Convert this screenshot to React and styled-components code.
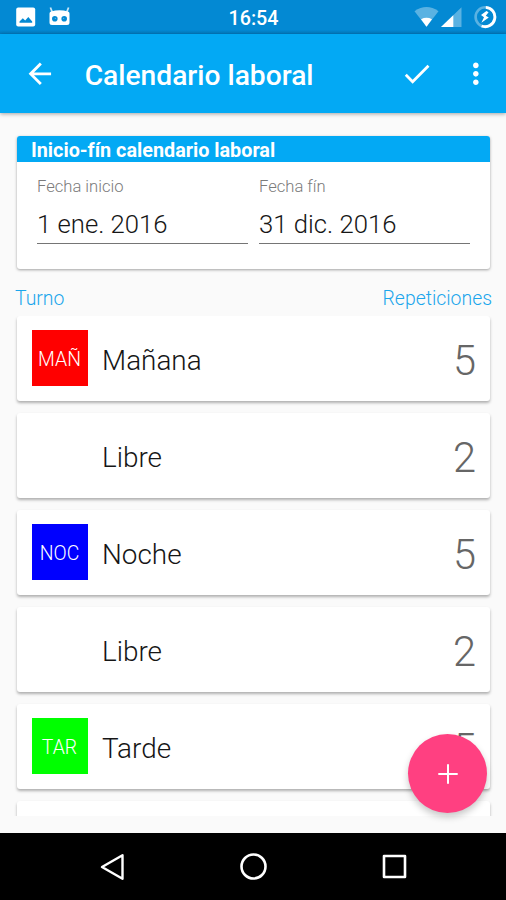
import React from "react";
import styled, { createGlobalStyle } from "styled-components";

const GlobalStyle = createGlobalStyle`
  body {
    margin: 0;
    background: #fafafa;
    font-family: Roboto, "Liberation Sans", sans-serif;
  }
`;

const Screen = styled.div`
  position: relative;
  width: 506px;
  height: 900px;
  display: flex;
  flex-direction: column;
  overflow: hidden;
  background: #fafafa;
`;

const StatusBar = styled.div`
  display: grid;
  grid-template-columns: 1fr auto 1fr;
  align-items: center;
  height: 34px;
  padding: 0 9px 0 15px;
  box-sizing: border-box;
  background: linear-gradient(#0389d3 30px, #0279bd 34px);
`;

const StatusIcons = styled.div`
  display: flex;
  align-items: center;
  justify-content: ${(props) => props.$align || "flex-start"};
  gap: ${(props) => props.$gap};
`;

const IconGap = styled.span`
  width: ${(props) => (props.$wide ? "11px" : "2px")};
`;

const Clock = styled.span`
  font-size: 19.7px;
  line-height: 24px;
  font-weight: 500;
  color: #fff;
  padding-top: 3px;
  margin: 0 10px 0 5px;
`;

const AppBar = styled.header`
  display: flex;
  align-items: center;
  height: 79px;
  padding: 0 13px 0 23px;
  box-sizing: border-box;
  flex-shrink: 0;
  background: #03a9f4;
  box-shadow: 0 1px 4px rgba(0, 0, 0, 0.35);
`;

const IconButton = styled.button`
  display: flex;
  padding: 0;
  border: none;
  background: none;
  color: #fff;
  cursor: pointer;
  margin-right: ${(props) => props.$space || "0"};
`;

const Title = styled.h1`
  flex: 1;
  margin: 4px 0 0;
  font-size: 28.2px;
  line-height: 34px;
  font-weight: 500;
  color: #fff;
`;

const Content = styled.main`
  height: 703px;
  overflow: hidden;
  padding: 23px 16px 0 17px;
  box-sizing: border-box;
`;

const Card = styled.section`
  background: #fff;
  border-radius: 3px;
  overflow: hidden;
  box-shadow: 0 1px 3px rgba(0, 0, 0, 0.36);
`;

const DatesCard = styled(Card)`
  height: 133px;
`;

const CardHeader = styled.h2`
  margin: 0;
  padding-left: 14px;
  height: 26px;
  line-height: 29px;
  font-size: 19.8px;
  font-weight: 700;
  color: #fff;
  background: #03a9f4;
`;

const DateFields = styled.div`
  display: grid;
  grid-template-columns: 1fr 1fr;
  gap: 11px;
  padding: 13px 20px 0;
`;

const Field = styled.label`
  display: flex;
  flex-direction: column;
  height: 69px;
  box-sizing: border-box;
  border-bottom: 1.5px solid #757575;
`;

const FieldLabel = styled.span`
  font-size: 16.6px;
  line-height: 24px;
  font-weight: 300;
  color: #7b7b7b;
`;

const FieldValue = styled.span`
  margin-top: 9px;
  font-size: 25.7px;
  line-height: 33px;
  font-weight: 300;
  color: #161616;
`;

const ListHeader = styled.div`
  display: flex;
  justify-content: space-between;
  height: 47px;
  padding-top: 18px;
  box-sizing: border-box;
  margin: 0 -2px;
  font-size: 19.4px;
  line-height: 24px;
  font-weight: 300;
  color: #1ba6ec;
`;

const List = styled.div`
  display: flex;
  flex-direction: column;
  gap: 12px;
  height: 500px;
  margin: 0 -4px;
  padding: 0 4px;
  overflow: hidden;
`;

const ShiftCard = styled(Card)`
  display: flex;
  align-items: center;
  flex-shrink: 0;
  height: 85px;
  padding: 0 14px 1px 14.5px;
  box-sizing: border-box;
  box-shadow: 0 2px 3px rgba(0, 0, 0, 0.3);
`;

const Badge = styled.div`
  display: flex;
  align-items: center;
  justify-content: center;
  width: 56px;
  height: 56px;
  padding-top: 2px;
  box-sizing: border-box;
  font-size: 19.4px;
  font-weight: 300;
  color: #fff;
  background: ${(props) => props.$color};
`;

const ShiftName = styled.span`
  flex: 1;
  margin: 5px 0 0 14.5px;
  font-size: 27.9px;
  line-height: 34px;
  font-weight: 300;
  color: #161616;
`;

const Repeats = styled.span`
  margin-top: 6px;
  font-size: 41.6px;
  line-height: 50px;
  font-weight: 300;
  color: #666;
`;

const AddButton = styled.button`
  position: absolute;
  right: 19px;
  bottom: 87px;
  width: 79px;
  height: 79px;
  display: flex;
  align-items: center;
  justify-content: center;
  padding: 0;
  border: none;
  border-radius: 50%;
  background: #ff4081;
  box-shadow: 0 4px 7px rgba(0, 0, 0, 0.22);
  cursor: pointer;
`;

const NavBar = styled.nav`
  display: flex;
  align-items: center;
  justify-content: center;
  gap: 113px;
  height: 67px;
  margin-top: auto;
  background: #000;
`;

const shifts = [
  { name: "Mañana", code: "MAÑ", color: "#ff0000", repeats: 5 },
  { name: "Libre", code: "", color: "transparent", repeats: 2 },
  { name: "Noche", code: "NOC", color: "#0000ff", repeats: 5 },
  { name: "Libre", code: "", color: "transparent", repeats: 2 },
  { name: "Tarde", code: "TAR", color: "#00ff00", repeats: 5 },
  { name: "", code: "", color: "transparent", repeats: "" },
];

const MaterialIcon = ({ d }) => (
  <svg width="33.7" height="33.7" viewBox="0 0 24 24" fill="currentColor">
    <path d={d} />
  </svg>
);

const PictureIcon = () => (
  <svg width="21" height="20" viewBox="0 0 21 20">
    <rect x="1.2" y="0.5" width="19" height="19" rx="2" fill="#fff" />
    <path d="M4.5 15.8 V14.5 L7.8 11.3 L10.2 13.6 L13.3 10 L17.2 14.5 V15.8 Z" fill="#0389d3" />
  </svg>
);

const RobotIcon = () => (
  <svg width="23" height="20" viewBox="0 0 23 20">
    <path d="M2.4 0.5 L4.2 5 M20.6 0.5 L18.8 5" stroke="#c9e6f7" strokeWidth="1.8" />
    <path d="M1.5 6.5 Q1.5 5 3 4.6 Q11.5 2 20 4.6 Q21.5 5 21.5 6.5 V15.5 Q21.5 18 19 18 H4 Q1.5 18 1.5 15.5 Z" fill="#fff" />
    <circle cx="6.8" cy="11.8" r="2.8" fill="#0389d3" />
    <circle cx="16.2" cy="11.8" r="2.8" fill="#0389d3" />
    <circle cx="7.4" cy="11.4" r="0.7" fill="#5aafe0" />
    <circle cx="15.6" cy="11.4" r="0.7" fill="#5aafe0" />
  </svg>
);

const WifiIcon = () => (
  <svg width="25" height="22" viewBox="0 0 25 22">
    <path d="M0.5 5.2 Q12.5 -3.2 24.5 5.2 L12.5 20.8 Z" fill="#fff" opacity="0.35" />
    <path d="M7 13.2 Q12.5 10.4 18 13.2 L12.5 20.8 Z" fill="#fff" />
  </svg>
);

const SignalIcon = () => (
  <svg width="21" height="22" viewBox="0 0 21 22">
    <path d="M0 21 L20.5 1.2 V21 Z" fill="#fff" opacity="0.35" />
    <path d="M0 21 L12.3 9.2 V21 Z" fill="#fff" />
  </svg>
);

const BatteryIcon = () => (
  <svg width="24" height="24" viewBox="0 0 24 24">
    <circle cx="12.3" cy="12" r="9.7" fill="none" stroke="#fff" strokeWidth="2.6" opacity="0.35" />
    <path d="M12.8 2.3 A9.7 9.7 0 1 1 8.6 21" fill="none" stroke="#fff" strokeWidth="2.8" />
    <path d="M13.4 6 L8 10 L11 12.2 L8.4 17.8 L15.8 12.6 L12.8 10.8 L15.6 7.2 Z" fill="#fff" />
  </svg>
);

const App = () => {
  return (
    <>
      <GlobalStyle />
      <Screen>
        <StatusBar>
          <StatusIcons $gap="12px">
            <PictureIcon />
            <RobotIcon />
          </StatusIcons>
          <Clock>16:54</Clock>
          <StatusIcons $gap="0" $align="flex-end">
            <WifiIcon />
            <IconGap />
            <SignalIcon />
            <IconGap $wide />
            <BatteryIcon />
          </StatusIcons>
        </StatusBar>
        <AppBar>
          <IconButton $space="28px" aria-label="Atrás">
            <MaterialIcon d="M20 11H7.83l5.59-5.59L12 4l-8 8 8 8 1.41-1.41L7.83 13H20v-2z" />
          </IconButton>
          <Title>Calendario laboral</Title>
          <IconButton $space="26px" aria-label="Guardar">
            <MaterialIcon d="M9 16.17L4.83 12l-1.42 1.41L9 19 21 7l-1.41-1.41z" />
          </IconButton>
          <IconButton aria-label="Más">
            <MaterialIcon d="M12 8c1.1 0 2-.9 2-2s-.9-2-2-2-2 .9-2 2 .9 2 2 2zm0 2c-1.1 0-2 .9-2 2s.9 2 2 2 2-.9 2-2-.9-2-2-2zm0 6c-1.1 0-2 .9-2 2s.9 2 2 2 2-.9 2-2-.9-2-2-2z" />
          </IconButton>
        </AppBar>
        <Content>
          <DatesCard>
            <CardHeader>Inicio-fín calendario laboral</CardHeader>
            <DateFields>
              <Field>
                <FieldLabel>Fecha inicio</FieldLabel>
                <FieldValue>1 ene. 2016</FieldValue>
              </Field>
              <Field>
                <FieldLabel>Fecha fín</FieldLabel>
                <FieldValue>31 dic. 2016</FieldValue>
              </Field>
            </DateFields>
          </DatesCard>
          <ListHeader>
            <span>Turno</span>
            <span>Repeticiones</span>
          </ListHeader>
          <List>
            {shifts.map((shift, index) => (
              <ShiftCard key={index}>
                <Badge $color={shift.color}>{shift.code}</Badge>
                <ShiftName>{shift.name}</ShiftName>
                <Repeats>{shift.repeats}</Repeats>
              </ShiftCard>
            ))}
          </List>
        </Content>
        <AddButton aria-label="Añadir">
          <svg width="20" height="20" viewBox="0 0 20 20">
            <path d="M10 0.3V19.7M0.3 10H19.7" stroke="#fff" strokeWidth="2" />
          </svg>
        </AddButton>
        <NavBar>
          <svg width="28" height="28" viewBox="0 0 28 28" fill="none" stroke="#fff" strokeWidth="2.4" strokeLinejoin="round">
            <path d="M4 14 L24.5 2.2 V25.8 Z" />
          </svg>
          <svg width="28" height="28" viewBox="0 0 28 28" fill="none" stroke="#fff" strokeWidth="2.6">
            <circle cx="14.5" cy="13.5" r="12" />
          </svg>
          <svg width="28" height="28" viewBox="0 0 28 28" fill="none" stroke="#fff" strokeWidth="2.6" strokeLinejoin="round">
            <rect x="4" y="3" width="21" height="21" />
          </svg>
        </NavBar>
      </Screen>
    </>
  );
};

export default App;
